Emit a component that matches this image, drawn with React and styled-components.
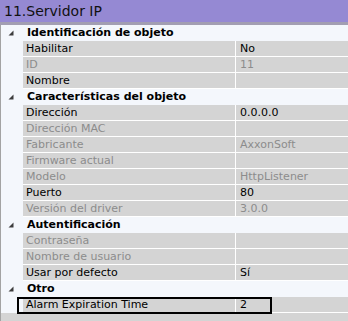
import React from "react";
import styled, { createGlobalStyle } from "styled-components";

const GlobalStyle = createGlobalStyle`
  html, body { margin: 0; padding: 0; background: #f4f7fc; }
  body { font-family: "DejaVu Sans", Verdana, sans-serif; }
`;

const Panel = styled.div`
  width: 348px;
  height: 321px;
  overflow: hidden;
  background: #f4f7fc;
  font-family: "DejaVu Sans", Verdana, sans-serif;
  font-size: 11px;
  color: #000;
`;

const Title = styled.div`
  height: 22px;
  line-height: 22px;
  padding-left: 4px;
  background: #9589d3;
  font-size: 14px;
  color: #111;
  border-bottom: 3px solid #a29eb2;
`;

const Grid = styled.div`
  border-left: 1px solid #a3a3a3;
  display: flex;
  flex-direction: column;
  height: 296px;
`;

const SectionRow = styled.div`
  display: grid;
  grid-template-columns: 22px 1fr;
  height: 16px;
  align-items: center;
  background: #f4f7fc;
`;

const Toggle = styled.span`
  display: flex;
  justify-content: flex-end;
  padding-right: 9px;
  height: 16px;
  align-items: center;
`;

const SectionTitle = styled.span`
  font-weight: bold;
  padding-left: 4px;
  line-height: 16px;
`;

const Row = styled.div`
  position: relative;
  display: grid;
  grid-template-columns: 22px 213px 1fr;
  height: 16px;
`;

const Gutter = styled.span`
  background: #f4f7fc;
`;

const Cell = styled.span`
  background: #d4d4d4;
  border-bottom: 1px solid #fff;
  line-height: 15px;
  white-space: nowrap;
  overflow: hidden;
  color: ${(p) => (p.$disabled ? "#8c8c8c" : "#000")};
`;

const Label = styled(Cell)`
  padding-left: 3px;
  border-right: 1px solid #fff;
`;

const Value = styled(Cell)`
  padding-left: 4px;
`;

const Highlight = styled.span`
  position: absolute;
  left: 16px;
  top: 0;
  width: 255px;
  height: 17px;
  box-sizing: border-box;
  border: 2px solid #000;
  pointer-events: none;
`;

const Filler = styled.div`
  flex: 1;
  background: #d4d4d4;
`;

const Arrow = () => (
  <svg width="6" height="6" viewBox="0 0 6 6">
    <polygon points="5.5,0.5 5.5,5.5 0.5,5.5" fill="#3c3c3c" />
  </svg>
);

const sections = [
  {
    title: "Identificación de objeto",
    rows: [
      { label: "Habilitar", value: "No" },
      { label: "ID", value: "11", disabled: true },
      { label: "Nombre", value: "" },
    ],
  },
  {
    title: "Características del objeto",
    rows: [
      { label: "Dirección", value: "0.0.0.0" },
      { label: "Dirección MAC", value: "", disabled: true },
      { label: "Fabricante", value: "AxxonSoft", disabled: true },
      { label: "Firmware actual", value: "", disabled: true },
      { label: "Modelo", value: "HttpListener", disabled: true },
      { label: "Puerto", value: "80" },
      { label: "Versión del driver", value: "3.0.0", disabled: true },
    ],
  },
  {
    title: "Autentificación",
    rows: [
      { label: "Contraseña", value: "", disabled: true },
      { label: "Nombre de usuario", value: "", disabled: true },
      { label: "Usar por defecto", value: "Sí" },
    ],
  },
  {
    title: "Otro",
    rows: [{ label: "Alarm Expiration Time", value: "2", highlight: true }],
  },
];

export default function App() {
  return (
    <>
      <GlobalStyle />
      <Panel>
        <Title>11.Servidor IP</Title>
        <Grid>
          {sections.map((s) => (
            <React.Fragment key={s.title}>
              <SectionRow>
                <Toggle>
                  <Arrow />
                </Toggle>
                <SectionTitle>{s.title}</SectionTitle>
              </SectionRow>
              {s.rows.map((r) => (
                <Row key={r.label}>
                  <Gutter />
                  <Label $disabled={r.disabled}>{r.label}</Label>
                  <Value $disabled={r.disabled}>{r.value}</Value>
                  {r.highlight && <Highlight />}
                </Row>
              ))}
            </React.Fragment>
          ))}
          <Filler />
        </Grid>
      </Panel>
    </>
  );
}
